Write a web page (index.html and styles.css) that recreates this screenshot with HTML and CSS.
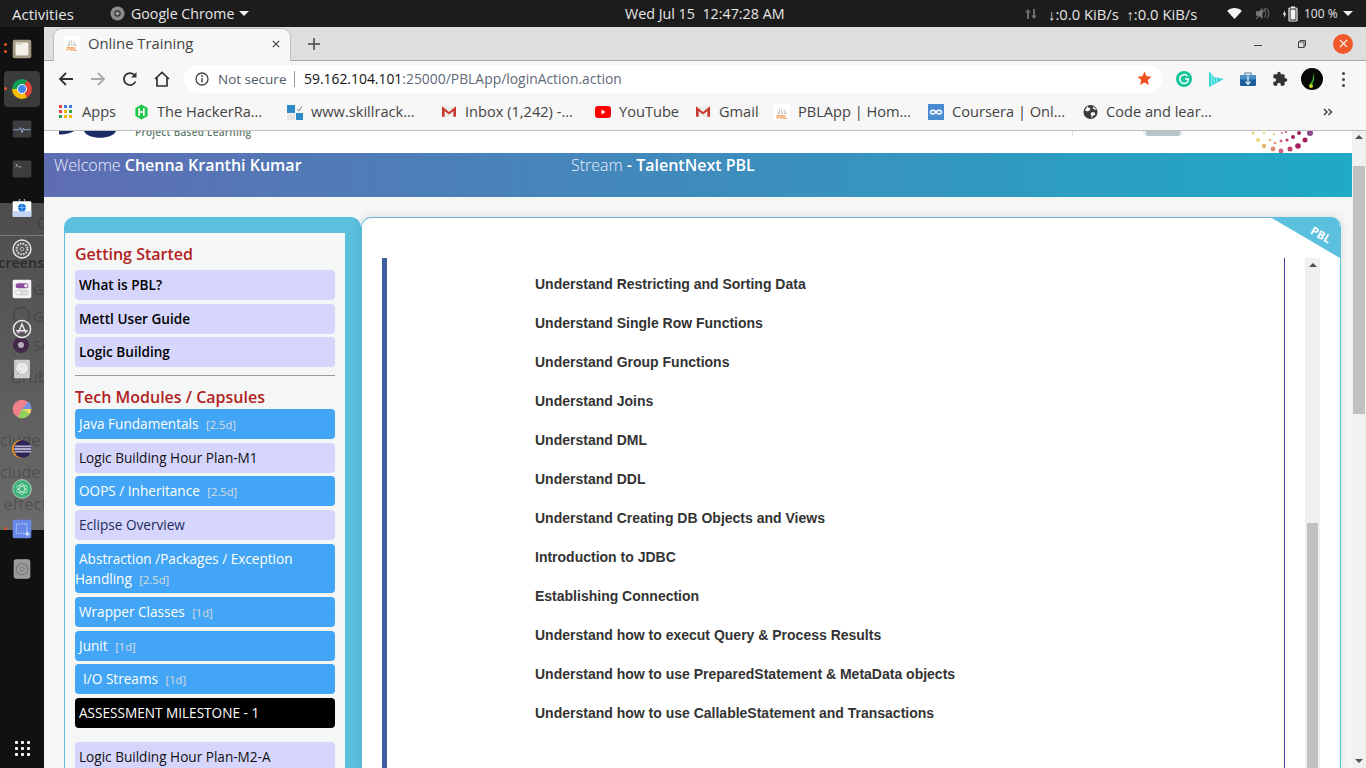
FILE: index.html
```html
<!DOCTYPE html>
<html lang="en">
<head>
<meta charset="utf-8">
<title>Online Training</title>
<link rel="stylesheet" href="styles.css">
</head>
<body>
<header class="topbar">
  <span class="activities">Activities</span>
  <span class="appmenu">
    <svg class="appicon" viewBox="0 0 16 16"><circle cx="8" cy="8" r="7.500" fill="#8c8c8c"/><circle cx="8" cy="8" r="3.400" fill="#2b2b2b"/><circle cx="8" cy="8" r="2.200" fill="#9a9a9a"/></svg>
    Google Chrome
    <i class="caret"></i>
  </span>
  <span class="clock">Wed Jul 15&nbsp; 12:47:28 AM</span>
  <span class="tray">
    <svg class="updown" viewBox="0 0 12 12"><path d="M3 1l3 3.400H4V11H2V4.400H0zM9 11L6 7.600h2V1h2v6.600h2z" fill="#6c6c6c"/></svg>
    <span class="net">↓:0.0 KiB/s&nbsp; ↑:0.0 KiB/s</span>
    <svg class="wifi" viewBox="0 0 16 12"><path d="M0 3.200C4.400-.9 11.600-.9 16 3.200L8 12z" fill="#f2f2f2"/></svg>
    <svg class="vol" viewBox="0 0 16 14"><path d="M1 4.500h3L8 1v12L4 9.500H1z" fill="#777"/><path d="M10 3c2 2 2 6 0 8M12.500 1.500c3 3 3 8 0 11" stroke="#666" fill="none" stroke-width="1.200"/><path d="M1 13L12 1" stroke="#999" stroke-width="1"/></svg>
    <svg class="batt" viewBox="0 0 18 16"><path d="M1.500 8.500L4 4.500v3h1.500L3 11.500v-3z" fill="#ddd"/><rect x="8" y="2" width="8" height="13" rx="1" fill="none" stroke="#f2f2f2" stroke-width="1.200"/><rect x="10" y="0.500" width="4" height="1.500" fill="#f2f2f2"/><rect x="9.500" y="3.500" width="5" height="10" fill="#f2f2f2"/></svg>
    <span class="pct">100 %</span>
    <i class="caret"></i>
  </span>
</header>

<div class="desktop">
  <nav class="dock">
    <span class="ghost g1">G</span><span class="ghost g2">creensh</span><span class="ghost g3">G</span><span class="ghost g4">G</span><span class="ghost g5">Se</span><span class="ghost g6">Grub</span><span class="ghost g7">clude p</span><span class="ghost g8">clude th</span><span class="ghost g9">effect</span>
    <i class="ghost-disc"></i><i class="ghost-ring"></i><i class="ghost-line"></i>

    <div class="slot"><i class="run r2"></i>
      <svg class="ic" viewBox="0 0 28 28"><rect x="1" y="1" width="26" height="26" rx="3" fill="#a49a84"/><rect x="5" y="5" width="18" height="18" rx="2" fill="#f3f0ea"/><rect x="5" y="5" width="9" height="3" fill="#d8d3c8"/></svg></div>
    <div class="slot slot-active"><i class="run"></i><span class="chrome"><i></i></span></div>
    <div class="slot"><svg class="ic" viewBox="0 0 28 28"><rect x="1" y="2" width="26" height="24" rx="2" fill="#3d3d40"/><path d="M2 15h8l2-3 2 7 2-6 1 2h9" stroke="#9fb4e8" stroke-width="1.200" fill="none"/></svg></div>
    <div class="slot"><svg class="ic" viewBox="0 0 28 28"><rect x="1" y="2" width="26" height="24" rx="2" fill="#3d3d3d"/><path d="M5 7l3 2-3 2" stroke="#ddd" fill="none"/><path d="M9 11h4" stroke="#ddd"/></svg></div>
    <div class="slot"><svg class="ic" viewBox="0 0 28 28"><path d="M10 3a4 4 0 018 0" fill="none" stroke="#8aa2d8" stroke-width="1.500"/><rect x="1" y="3" width="26" height="22" rx="1.500" fill="#fff"/><rect x="1" y="17" width="26" height="8" fill="#c5d4f4"/><circle cx="14" cy="12" r="5.500" fill="#1677d8"/><path d="M8.500 12h11M14 6.500v11" stroke="#bcdcff" stroke-width=".8"/></svg></div>
    <div class="slot"><svg class="ic" viewBox="0 0 28 28"><circle cx="14" cy="14" r="12.500" fill="#555" stroke="#e6e6e6" stroke-width="2"/><circle cx="14" cy="14" r="7.500" fill="none" stroke="#d0d0d0" stroke-width="3" stroke-dasharray="2.500 1.400"/><circle cx="14" cy="14" r="2.500" fill="none" stroke="#ddd"/></svg></div>
    <div class="slot"><svg class="ic" viewBox="0 0 28 28"><rect x="1" y="1" width="26" height="26" rx="2" fill="#f4f4f4"/><rect x="5" y="6" width="18" height="7" rx="3.500" fill="#8e4b9c"/><circle cx="19.500" cy="9.500" r="2.500" fill="#eee"/><rect x="5" y="15.500" width="18" height="7" rx="3.500" fill="#ddd" stroke="#aaa" stroke-width=".5"/><circle cx="8.500" cy="19" r="2.500" fill="#fff"/></svg></div>
    <div class="slot"><svg class="ic" viewBox="0 0 28 28"><circle cx="14" cy="14" r="12" fill="#555" stroke="#eee" stroke-width="2"/><path d="M8.500 20L14 7l5.500 13M6 16.500h16" stroke="#eee" stroke-width="2" fill="none"/><path d="M6 18h16" stroke="#c79ad0" stroke-width="1"/></svg></div>
    <div class="slot"><svg class="ic" viewBox="0 0 28 28"><rect x="3" y="1" width="22" height="26" rx="1.500" fill="#cfcfcf"/><circle cx="14" cy="13" r="9" fill="#e9e9e9" stroke="#aaa"/><path d="M6 22l6-6" stroke="#999"/></svg></div>
    <div class="slot"><svg class="ic" viewBox="0 0 28 28"><circle cx="14" cy="14" r="13" fill="#f0808a"/><path d="M14 14L23 3.800A13 13 0 0127 14z" fill="#6f93e0"/><path d="M14 14H27a13 13 0 01-3.500 8.900z" fill="#f0d85c"/><path d="M14 14l9.500 8.900A13 13 0 0114 27 13 13 0 016 24.500z" fill="#8fcf5f" transform="rotate(-12 14 14)"/></svg></div>
    <div class="slot"><svg class="ic" viewBox="0 0 28 28"><circle cx="13" cy="14" r="13" fill="#e8951c"/><circle cx="15" cy="14" r="12.500" fill="#2d2558"/><rect x="4" y="9" width="23" height="2.500" fill="#b3aec8"/><rect x="3" y="12.500" width="24" height="3" fill="#b3aec8"/><rect x="4" y="16.500" width="23" height="2.500" fill="#b3aec8"/></svg></div>
    <div class="slot"><svg class="ic" viewBox="0 0 28 28"><circle cx="14" cy="14" r="13" fill="#3fb27a" stroke="#d8e8dc"/><g fill="none" stroke="#c8ecd8" stroke-width="1"><ellipse cx="14" cy="14" rx="8" ry="3.500" transform="rotate(30 14 14)"/><ellipse cx="14" cy="14" rx="8" ry="3.500" transform="rotate(90 14 14)"/><ellipse cx="14" cy="14" rx="8" ry="3.500" transform="rotate(150 14 14)"/></g></svg></div>
    <div class="slot"><i class="run"></i><svg class="ic" viewBox="0 0 28 28"><rect x="1" y="1" width="26" height="26" rx="2" fill="#6689e8"/><rect x="6" y="7" width="15" height="13" fill="none" stroke="#fff" stroke-dasharray="2 1.500"/><path d="M18 21h7M21.500 17.500v7" stroke="#fff" stroke-width="1.200"/></svg></div>
    <div class="slot"><svg class="ic" viewBox="0 0 28 28"><rect x="3" y="1" width="22" height="26" rx="2.500" fill="#9a9a9a" stroke="#bbb"/><circle cx="14" cy="14" r="8" fill="none" stroke="#777" stroke-width="1.500"/><circle cx="14" cy="14" r="3" fill="none" stroke="#777"/></svg></div>

    <div class="slot slot-grid"><span class="dots9"><i></i><i></i><i></i><i></i><i></i><i></i><i></i><i></i><i></i></span></div>
  </nav>

  <div class="browser">
    <div class="tabstrip">
      <div class="tab">
        <svg class="fav" viewBox="0 0 16 16"><rect width="16" height="16" fill="#fff"/><path d="M3 10l3-7v7zM7 10V2l2 8zM10 10L9.500 4 13 10z" fill="#cfcfcf"/><text x="8" y="15" class="favtxt">PBL</text></svg>
        <span class="tabtitle">Online Training</span>
        <svg class="tabx" viewBox="0 0 10 10"><path d="M1 1l8 8M9 1l-8 8" stroke="#444" stroke-width="1.500"/></svg>
      </div>
      <svg class="newtab" viewBox="0 0 12 12"><path d="M6 0v12M0 6h12" stroke="#444" stroke-width="1.500"/></svg>
      <div class="winctl">
        <i class="wmin"></i>
        <svg class="wmax" viewBox="0 0 8 8"><path d="M2 2V.5h5.500V6H6" fill="none" stroke="#444"/><rect x=".5" y="2" width="5.500" height="5.500" fill="none" stroke="#444"/></svg>
        <span class="wclose"><svg viewBox="0 0 10 10"><path d="M1 1l8 8M9 1l-8 8" stroke="#fff" stroke-width="1.300"/></svg></span>
      </div>
    </div>

    <div class="toolbar">
      <svg class="tb back" viewBox="0 0 16 16"><path d="M15 8H2M8 2L2 8l6 6" stroke="#333" stroke-width="1.800" fill="none"/></svg>
      <svg class="tb fwd" viewBox="0 0 16 16"><path d="M1 8h13M8 2l6 6-6 6" stroke="#aaa" stroke-width="1.800" fill="none"/></svg>
      <svg class="tb reload" viewBox="0 0 16 16"><path d="M13.500 10.500A6 6 0 1112.800 4.500" stroke="#333" stroke-width="1.800" fill="none"/><path d="M14.500 1v5.500H9z" fill="#333"/></svg>
      <svg class="tb home" viewBox="0 0 16 16"><path d="M1 8l7-6.500L15 8M3 6.500V15h10V6.500" stroke="#333" stroke-width="1.700" fill="none"/></svg>
      <div class="omnibox">
        <svg class="info" viewBox="0 0 14 14"><circle cx="7" cy="7" r="6" fill="none" stroke="#444" stroke-width="1.300"/><path d="M7 6v4.500" stroke="#444" stroke-width="1.400"/><circle cx="7" cy="4" r=".9" fill="#444"/></svg>
        <span class="notsec">Not secure</span>
        <i class="omnisep"></i>
        <span class="url"><b>59.162.104.101</b>:25000/PBLApp/loginAction.action</span>
        <svg class="star" viewBox="0 0 16 16"><path d="M8 .6l2.200 5 5.400.5-4.100 3.600 1.200 5.300L8 12.200 3.300 15l1.200-5.300L.4 6.100l5.400-.5z" fill="#f1511e"/></svg>
      </div>
      <svg class="ext ext-g" viewBox="0 0 16 16"><circle cx="8" cy="8" r="8" fill="#15c39a"/><path d="M11.500 5.200A4.400 4.400 0 108 12.400 4.400 4.400 0 0012.400 8H9" stroke="#fff" stroke-width="1.500" fill="none"/></svg>
      <svg class="ext ext-p" viewBox="0 0 15 16"><path d="M0 0l5 6 10 2-15 8z" fill="#3ed6d8"/><path d="M2.500 3v11M5 6v6.500M7.500 6.500v4.500" stroke="#8ef0ee" stroke-width="1"/></svg>
      <svg class="ext ext-b" viewBox="0 0 16 14"><path d="M5 3V1h6v2" fill="none" stroke="#5c84a8" stroke-width="1.200"/><rect y="3" width="16" height="11" rx="1.500" fill="#1d5f9c"/><rect y="3" width="16" height="4.500" rx="1" fill="#4c8fc4"/><path d="M8 4v8M5.500 9.500L8 12.500l2.500-3" stroke="#fff" stroke-width="1.100" fill="none"/></svg>
      <svg class="ext ext-x" viewBox="0 0 24 24"><path d="M20.500 11H19V7a2 2 0 00-2-2h-4V3.500a2.500 2.500 0 00-5 0V5H4a2 2 0 00-2 2v3.800h1.500a2.700 2.700 0 010 5.400H2V20a2 2 0 002 2h3.800v-1.500a2.700 2.700 0 015.400 0V22H17a2 2 0 002-2v-4h1.500a2.500 2.500 0 000-5z" fill="#333"/></svg>
      <svg class="avatar" viewBox="0 0 22 22"><circle cx="11" cy="11" r="11" fill="#050805"/><path d="M13 4l-1.500 8-2.500 4 2 .5 2.200-5z" fill="#38b41e"/><circle cx="10" cy="18" r="2" fill="#c8d828"/></svg>
      <span class="kebab"><i></i><i></i><i></i></span>
    </div>

    <div class="bookmarks">
      <span class="bm"><span class="appsgrid"><i class="a"></i><i class="b"></i><i class="c"></i><i class="d"></i><i class="e"></i><i class="f"></i><i class="g"></i><i class="h"></i><i class="j"></i></span><span class="bmt">Apps</span></span>
      <span class="bm"><svg class="bmi narrow" viewBox="0 0 16 16"><path d="M8 0l6.500 3.700v8.600L8 16l-6.500-3.700V3.700z" fill="#1ec64a"/><path d="M5.500 4v8M10.500 4v8M5.500 8h5" stroke="#fff" stroke-width="1.800"/></svg><span class="bmt">The HackerRa…</span></span>
      <span class="bm"><svg class="bmi" viewBox="0 0 16 16"><rect width="8" height="8" y="1" fill="#2d88c8"/><rect x="9" y="9" width="7" height="7" fill="#2d88c8"/><rect y="10" width="8" height="6" fill="#e4e4e4"/><path d="M10 5l2 2 3-5" stroke="#888" fill="none"/></svg><span class="bmt">www.skillrack…</span></span>
      <span class="bm"><svg class="bmi gm" viewBox="0 0 16 12"><rect width="16" height="12" fill="#eee"/><path d="M0 0l8 6.500L16 0v12h-3V5.500L8 9.500 3 5.500V12H0z" fill="#c9382c"/></svg><span class="bmt">Inbox (1,242) -…</span></span>
      <span class="bm"><svg class="bmi yt" viewBox="0 0 16 12"><rect width="16" height="12" rx="3" fill="#f00"/><path d="M6.500 3.500v5l4-2.500z" fill="#fff"/></svg><span class="bmt">YouTube</span></span>
      <span class="bm"><svg class="bmi gm" viewBox="0 0 16 12"><rect width="16" height="12" fill="#eee"/><path d="M0 0l8 6.500L16 0v12h-3V5.500L8 9.500 3 5.500V12H0z" fill="#c9382c"/></svg><span class="bmt">Gmail</span></span>
      <span class="bm"><svg class="bmi" viewBox="0 0 16 16"><rect width="16" height="16" fill="#fff"/><path d="M3 10l3-7v7zM7 10V2l2 8zM10 10L9.500 4 13 10z" fill="#cfcfcf"/><text x="8" y="15" class="favtxt">PBL</text></svg><span class="bmt">PBLApp | Hom…</span></span>
      <span class="bm"><svg class="bmi" viewBox="0 0 16 16"><rect width="16" height="16" fill="#4a8ad0"/><path d="M8 8c-1.500-2.500-5-2.500-5.500 0s4 2.500 5.500 0c1.500-2.500 5-2.500 5.500 0s-4 2.500-5.500 0z" fill="none" stroke="#fff" stroke-width="1.500"/></svg><span class="bmt">Coursera | Onl…</span></span>
      <span class="bm"><svg class="bmi narrow" viewBox="0 0 16 16"><circle cx="8" cy="8" r="7.500" fill="#3c3c3c"/><path d="M5 1.500l1 2 2 .5-1 2.500-2.500 1L2 6M9.500 15l1-3 2.500-1-.5-2.500L9.500 8 8 10l1 2M11 2l-.5 2 2 1.500 2-.5" fill="#f7f7f7"/></svg><span class="bmt">Code and lear…</span></span>
      <svg class="more" viewBox="0 0 10 8"><path d="M1 1l3 3-3 3M5.500 1l3 3-3 3" stroke="#444" stroke-width="1.500" fill="none"/></svg>
    </div>

    <div class="page">
      <div class="pagebody">
        <div class="sitehead">
          <svg class="logo" viewBox="0 0 60 8"><path d="M0 0h15C12 2 6 3.500 0 3.500z" fill="#1c2d66"/><path d="M25 0h32C54 9 28 9 25 0z" fill="#1c2d66"/></svg>
          <span class="tagline">Project Based Learning</span>
          <i class="headsep"></i>
          <i class="headpill"><i></i></i>
          <svg class="burst" viewBox="0 0 66 22"><g fill="#ead87c"><circle cx="3" cy="2" r="1.600"/><circle cx="8" cy="9" r="2"/><circle cx="14" cy="2" r="1.200"/></g><g fill="#e2b86a"><circle cx="14" cy="15" r="2.200"/><circle cx="20" cy="9" r="1.300"/><circle cx="24" cy="3" r="1"/></g><g fill="#da8d6c"><circle cx="23" cy="18" r="2.400"/><circle cx="25" cy="12" r="1.300"/></g><g fill="#d0667c"><circle cx="31" cy="20" r="2.400"/><circle cx="31" cy="10" r="1.500"/><circle cx="32" cy="2" r="1"/></g><g fill="#b84068"><circle cx="40" cy="18" r="2.500"/><circle cx="37" cy="9" r="1.600"/><circle cx="36" cy="1" r="1"/></g><g fill="#a0205e"><circle cx="48" cy="15" r="2.800"/><circle cx="43" cy="6" r="2"/><circle cx="49" cy="2" r="2"/><circle cx="55" cy="9" r="2.500"/></g><circle cx="60" cy="2" r="3" fill="#8a4a90"/></svg>
        </div>
        <div class="banner">
          <span class="welcome">Welcome <b>Chenna Kranthi Kumar</b></span>
          <span class="stream">Stream <b>- TalentNext PBL</b></span>
        </div>
        <div class="columns">
          <aside class="sidepanel">
            <div class="sideinner">
              <h3 class="sidehead">Getting Started</h3>
              <a class="item lav strong">What is PBL?</a>
              <a class="item lav strong">Mettl User Guide</a>
              <a class="item lav strong">Logic Building</a>
              <hr class="siderule">
              <h3 class="sidehead second">Tech Modules / Capsules</h3>
              <a class="item blue">Java Fundamentals <small>[2.5d]</small></a>
              <a class="item lav">Logic Building Hour Plan-M1</a>
              <a class="item blue">OOPS / Inheritance <small>[2.5d]</small></a>
              <a class="item lav navy">Eclipse Overview</a>
              <a class="item blue tall">Abstraction /Packages / Exception Handling <small>[2.5d]</small></a>
              <a class="item blue">Wrapper Classes <small>[1d]</small></a>
              <a class="item blue">Junit <small>[1d]</small></a>
              <a class="item blue deep">I/O Streams <small>[1d]</small></a>
              <a class="item black">ASSESSMENT MILESTONE - 1</a>
              <a class="item lav after">Logic Building Hour Plan-M2-A</a>
            </div>
          </aside>
          <main class="card">
            <div class="ribbon"><span>PBL</span></div>
            <div class="cardrow">
              <ul class="topics">
                <li>Understand Restricting and Sorting Data</li>
                <li>Understand Single Row Functions</li>
                <li>Understand Group Functions</li>
                <li>Understand Joins</li>
                <li>Understand DML</li>
                <li>Understand DDL</li>
                <li>Understand Creating DB Objects and Views</li>
                <li>Introduction to JDBC</li>
                <li>Establishing Connection</li>
                <li>Understand how to execut Query &amp; Process Results</li>
                <li>Understand how to use PreparedStatement &amp; MetaData objects</li>
                <li>Understand how to use CallableStatement and Transactions</li>
              </ul>
              <div class="innerscroll"><i class="arrow-up"></i><i class="innerthumb"></i></div>
            </div>
          </main>
        </div>
      </div>
      <div class="vscroll"><i class="arrow-up"></i><i class="vthumb"></i><i class="arrow-down"></i></div>
    </div>
  </div>
</div>
</body>
</html>
```

FILE: styles.css
```css
* { box-sizing: border-box; }
html, body { margin: 0; height: 100%; }
body { width: 1366px; height: 768px; overflow: hidden; font-family: "Open Sans", "Noto Sans", sans-serif; background: #111; display: flex; flex-direction: column; }
i { display: block; font-style: normal; }

/* top bar */
.topbar { height: 27px; flex: none; background: #1c1c1c; color: #e6e6e6; font-size: 14.200px; display: flex; align-items: center; position: relative; }
.activities { margin-left: 12px; width: 98px; font-size: 15px; }
.appmenu { display: flex; align-items: center; width: 515px; }
.appicon { width: 15px; height: 15px; margin-right: 6px; }
.caret { width: 0; height: 0; border-left: 5px solid transparent; border-right: 5px solid transparent; border-top: 5px solid #eee; margin-left: 5px; }
.clock { width: 400px; font-size: 14.300px; }
.tray { display: flex; align-items: center; font-size: 14.800px; }
.updown { width: 12px; height: 12px; margin-right: 11px; }
.net { width: 179px; white-space: nowrap; }
.wifi { width: 15px; height: 11px; margin-right: 13px; }
.vol { width: 15px; height: 13px; margin-right: 11px; }
.batt { width: 18px; height: 16px; margin-right: 5px; }
.pct { font-size: 12px; }
.tray .caret { margin-left: 5px; }

/* dock */
.desktop { flex: 1; display: flex; min-height: 0; }
.dock { width: 44px; flex: none; position: relative; overflow: hidden; padding-top: 2px; display: flex; flex-direction: column;
  background: linear-gradient(#111 0 176px, #4d4d4d 176px, #6a6a6a 503px, #111 503px); }
.slot { height: 40px; flex: none; width: 44px; display: flex; align-items: center; justify-content: center; position: relative; }
.slot-active::before { content: ""; position: absolute; left: 4px; top: 2px; width: 36px; height: 36px; border-radius: 4px; background: #3b3b3b; }
.slot-grid { margin-top: auto; }
.ic { width: 20px; height: 20px; position: relative; }
.run { position: absolute; left: 4px; top: 18px; width: 3px; height: 3px; border-radius: 50%; background: #e95420; }
.run.r2 { top: 14px; box-shadow: 0 7px 0 #e95420; }
.chrome { width: 20px; height: 20px; border-radius: 50%; position: relative; background: conic-gradient(from 30deg, #db4437 0 120deg, #fbbc05 120deg 240deg, #0f9d58 240deg 360deg); display: flex; align-items: center; justify-content: center; }
.chrome i { width: 10px; height: 10px; border-radius: 50%; background: #4285f4; border: 1.500px solid #fff; }
.dots9 { display: grid; grid-template-columns: repeat(3, 3px); gap: 3px; }
.dots9 i { width: 3px; height: 3px; background: #fff; border-radius: 1px; }
.ghost { position: absolute; color: rgba(0,0,0,.24); font-size: 15px; white-space: nowrap; line-height: 18px; }
.g1 { left: 37px; top: 187px; font-size: 16px; }
.g2 { left: -2px; top: 227px; font-weight: 700; font-size: 14px; color: rgba(0,0,0,.42); }
.g3 { left: 33px; top: 253px; }
.g4 { left: 33px; top: 280px; }
.g5 { left: 33px; top: 309px; }
.g6 { left: 10px; top: 341px; font-size: 16px; }
.g7 { left: 0; top: 404px; font-size: 16px; }
.g8 { left: 0; top: 436px; font-size: 16px; }
.g9 { left: 3px; top: 468px; font-size: 17px; }
.ghost-disc { position: absolute; left: 13px; top: 310px; width: 16px; height: 16px; border-radius: 50%; background: #b5adb5; border: 5.500px solid #45294a; }
.ghost-ring { position: absolute; left: 13px; top: 280px; width: 17px; height: 17px; border-radius: 50%; border: 1px solid #3f3f3f; }
.ghost-line { position: absolute; left: 0; top: 208px; width: 44px; height: 1px; background: #777; }

/* browser */
.browser { flex: 1; min-width: 0; display: flex; flex-direction: column; }
.tabstrip { height: 34px; flex: none; background: #dedede; border-bottom: 1px solid #a8a8a8; display: flex; align-items: flex-end; position: relative; }
.tab { width: 238px; height: 33px; margin-left: 9px; margin-bottom: -1px; background: #f7f7f7; border: 1px solid #bdbdbd; border-bottom: none; border-radius: 9px 9px 0 0; display: flex; align-items: center; position: relative; padding: 0 0 3px 10px; }
.fav { width: 16px; height: 16px; flex: none; }
.favtxt { font-size: 5.500px; font-weight: 700; fill: #f08a30; text-anchor: middle; font-family: "Liberation Sans", sans-serif; }
.tabtitle { font-size: 14.800px; color: #444; margin: 0 0 2px 8px; width: 184px; white-space: nowrap; }
.tabx { width: 8px; height: 8px; }
.newtab { width: 12px; height: 12px; margin-left: 17px; margin-bottom: 10px; }
.winctl { margin-left: auto; display: flex; align-items: center; height: 33px; align-self: flex-start; }
.wmin { width: 8px; height: 1px; background: #444; margin-top: 4px; margin-right: 36px; }
.wmax { width: 8px; height: 8px; margin-right: 27px; }
.wclose { width: 20px; height: 20px; border-radius: 50%; background: #f0582a; margin-right: 13px; display: flex; align-items: center; justify-content: center; }
.wclose svg { width: 9px; height: 9px; }

.toolbar { height: 34px; flex: none; background: #f7f7f7; display: flex; align-items: center; padding-top: 2px; }
.tb { width: 16px; height: 16px; flex: none; }
.back { margin-left: 14px; }
.fwd { margin-left: 16px; }
.reload { margin-left: 16px; }
.home { margin-left: 16px; }
.omnibox { width: 978px; height: 28px; margin-left: 14px; background: #fff; border-radius: 14px; display: flex; align-items: center; font-size: 13.500px; color: #5f6368; position: relative; flex: none; padding-left: 11px; padding-bottom: 1px; }
.info { width: 14px; height: 14px; flex: none; }
.notsec { margin-left: 9px; color: #4f5b68; white-space: nowrap; width: 70px; }
.omnisep { width: 1px; height: 16px; background: #999; margin-left: 6px; margin-right: 9px; }
.url { white-space: nowrap; color: #5f6a78; font-size: 13.900px; }
.url b { font-weight: 400; color: #111; }
.star { width: 15px; height: 15px; margin-left: auto; margin-right: 10px; }
.ext { flex: none; }
.ext-g { width: 16px; height: 16px; margin-left: 14px; }
.ext-p { width: 15px; height: 16px; margin-left: 17px; }
.ext-b { width: 16px; height: 14px; margin-left: 16px; }
.ext-x { width: 16px; height: 16px; margin-left: 16px; }
.avatar { width: 22px; height: 22px; margin-left: 13px; flex: none; }
.kebab { margin-left: 19px; display: flex; flex-direction: column; gap: 3px; }
.kebab i { width: 3px; height: 3px; border-radius: 50%; background: #444; }

.bookmarks { height: 36px; flex: none; background: #f7f7f7; border-bottom: 1px solid #bdbdbd; display: grid; grid-template-columns: 75px 153px 155px 153px 101px 78px 154px 155px 240px 20px; align-items: center; padding-left: 15px; font-size: 14.600px; color: #444; padding-bottom: 2px; }
.bm { display: flex; align-items: center; white-space: nowrap; }
.bmt { margin-bottom: 2px; }
.bmi { width: 16px; height: 16px; flex: none; margin-right: 8px; }
.bmi.narrow { width: 15px; }
.bmi.gm { width: 14px; height: 11px; margin-right: 9px; }
.bmi.yt { height: 12px; margin-right: 8px; }
.appsgrid { display: grid; grid-template-columns: repeat(3, 3px); gap: 2px; width: 13px; margin-right: 10px; }
.appsgrid i { width: 3px; height: 3px; }
.a { background: #e8453c; } .b { background: #3b7de0; } .c { background: #3b7de0; }
.d { background: #e8453c; } .e { background: #f4b400; } .f { background: #2da44e; }
.g { background: #2da44e; } .h { background: #f4b400; } .j { background: #f4b400; }
.more { width: 10px; height: 8px; }

/* page */
.page { flex: 1; min-height: 0; display: flex; background: #f5f7f7; }
.pagebody { flex: 1; min-width: 0; display: flex; flex-direction: column; }
.vscroll { width: 14px; flex: none; background: #f1f1f1; display: flex; flex-direction: column; align-items: center; padding-top: 4px; }
.arrow-up { width: 0; height: 0; border-left: 4px solid transparent; border-right: 4px solid transparent; border-bottom: 4px solid #505050; flex: none; }
.arrow-down { width: 0; height: 0; border-left: 4px solid transparent; border-right: 4px solid transparent; border-top: 4px solid #505050; margin-top: auto; margin-bottom: 5px; }
.vthumb { width: 12px; height: 248px; background: #c1c1c1; margin-top: 27px; }

.sitehead { height: 22px; flex: none; background: #fff; display: flex; align-items: flex-start; overflow: hidden; position: relative; }
.logo { width: 60px; height: 8px; margin-left: 15px; flex: none; }
.tagline { margin-left: 16px; margin-top: -6px; font-size: 10px; line-height: 14px; font-weight: 600; color: #5f7a6c; width: 140px; letter-spacing: .25px; white-space: nowrap; }
.headsep { width: 1px; height: 5px; background: #ddd; margin-left: 797px; }
.headpill { width: 40px; height: 5px; margin-left: 70px; background: #e6eef0; border-radius: 0 0 3px 3px; padding: 0 3px; }
.headpill i { height: 5px; background: #b7c6ca; border-radius: 0 0 2px 2px; }
.burst { width: 66px; height: 22px; margin-left: 67px; flex: none; }

.banner { height: 44px; flex: none; background: linear-gradient(90deg, #5f6db3, #1faac6); color: #eef; font-size: 16px; font-weight: 300; display: flex; padding: 1px 0 0 10px; line-height: 22px; }
.banner b { font-weight: 600; color: #fff; }
.welcome { width: 517px; }

.columns { flex: 1; min-height: 0; display: flex; padding: 20px 11px 0 20px; }
.sidepanel { width: 297px; flex: none; background: #5bc0de; border-radius: 10px 10px 0 0; padding: 16px 16px 0 1px; }
.sideinner { height: 100%; background: #f5f7f7; padding: 9px 10px 0; overflow: hidden; }
.sidehead { margin: 0 0 4px; font-size: 16px; line-height: 24px; font-weight: 600; color: #b22222; }
.sidehead.second { margin-bottom: 0; height: 23.900px; }
.siderule { border: 0; border-top: 1px solid #999; margin: 7.600px 0 9px; height: 0; }
.item { display: block; height: 30px; line-height: 30px; margin-bottom: 3.700px; border-radius: 4px; font-size: 13.600px; text-indent: 4px; }
.lav { background: #d6d6fc; color: #111; }
.strong { font-weight: 600; color: #000; }
.navy { color: #1c2b60; }
.blue { background: #42a5f5; color: #fff; }
.black { background: #000; color: #fff; }
.tall { height: 49.700px; line-height: 20px; padding-top: 5px; }
.deep { text-indent: 8px; }
.after { margin-top: 14px; }
.item small { font-size: 11.200px; color: #ddd; margin-left: 4px; }

.card { flex: 1; min-width: 0; background: #fff; border: 1px solid #5bc0de; border-top-color: #69b6d6; border-bottom: none; border-radius: 10px 10px 0 0; position: relative; padding: 40px 0 0 20px; box-shadow: 0 0 10px rgba(0,0,0,.12); }
.ribbon { position: absolute; right: 0; top: -1px; width: 70px; height: 41px; background: #5bc0de; clip-path: polygon(0 0, 100% 100%, 100% 0); border-top-right-radius: 10px; }
.ribbon span { display: block; position: absolute; left: 40px; top: 11px; color: #fff; font-size: 11.500px; font-weight: 700; line-height: 14px; transform: rotate(30deg); }
.cardrow { display: flex; height: 100%; }
.topics { width: 903px; flex: none; list-style: none; margin: 0; padding: 6.500px 0 0 148px; border-left: 5px solid #3f5f9f; border-right: 1px solid #4b3a9b; font: 700 14px/39px "Liberation Sans", Arial, sans-serif; color: #333; }
.innerscroll { width: 15px; margin-left: 20px; background: #f0f0f0; display: flex; flex-direction: column; align-items: center; padding-top: 5px; }
.innerthumb { width: 11px; margin-top: 256px; flex: 1; background: #c1c1c1; }
```
